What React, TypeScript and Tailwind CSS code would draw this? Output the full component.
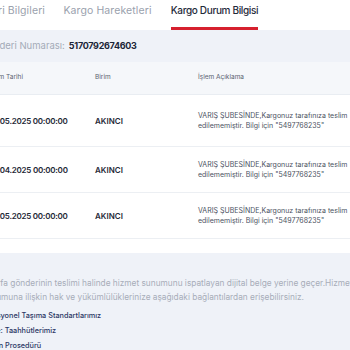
import React from "react";

const rows = [
  { date: "02.05.2025 00:00:00", unit: "AKINCI", h: "h-[52px]" },
  { date: "30.04.2025 00:00:00", unit: "AKINCI", h: "h-[46px]" },
  { date: "02.05.2025 00:00:00", unit: "AKINCI", h: "h-[46px]" },
];

const desc = (
  <>
    VARIŞ ŞUBESİNDE,Kargonuz tarafınıza teslim
    <br />
    edilememiştir. Bilgi için "5497768235"
  </>
);

export default function App() {
  return (
    <div
      className="w-[350px] h-[350px] overflow-hidden bg-[#eff2f8] text-[#1e293b]"
      style={{ fontFamily: "Inter, 'Noto Sans', sans-serif" }}
    >
      {/* Tabs */}
      <div className="bg-white h-[30px] flex items-start whitespace-nowrap">
        <div className="w-[45px] shrink-0 flex justify-end overflow-hidden pt-[3px] text-[10.5px] tracking-[0.1px] text-[#9aa1ad]">
          <span className="shrink-0">Gönderi Bilgileri</span>
        </div>
        <div className="ml-[24px] w-[77px] shrink-0 flex justify-center pt-[3px] text-[10.5px] tracking-[0.1px] text-[#9aa1ad]">
          Kargo Hareketleri
        </div>
        <div className="ml-[25px] w-[87px] shrink-0 flex flex-col">
          <div className="pt-[3px] h-[27px] flex justify-center text-[10px] tracking-[-0.35px] font-medium text-[#1f2a3a]">
            Kargo Durum Bilgisi
          </div>
          <div className="h-[3px] bg-[#d6202e]" />
        </div>
      </div>

      {/* Shipment number */}
      <div className="h-[32px] flex items-center ml-[-19px] whitespace-nowrap text-[9.5px]">
        <span className="text-[#a3aab7]">Gönderi Numarası:</span>
        <span className="ml-[4px] text-[9px] tracking-[-0.3px] font-bold text-[#1b2638]">5170792674603</span>
      </div>

      {/* Table */}
      <div className="ml-[-12px] w-[380px]">
        <div className="h-[33px] bg-[#f5f7fa] border-b border-[#e9edf2] grid grid-cols-[107px_103px_1fr] items-center text-[6.5px] text-[#5b6270] whitespace-nowrap">
          <div>İşlem Tarihi</div>
          <div>Birim</div>
          <div>İşlem Açıklama</div>
        </div>
        <div className="bg-white pb-[14px]">
          {rows.map((r, i) => (
            <div
              key={i}
              className={`${r.h} border-b border-[#eceff3] grid grid-cols-[107px_103px_1fr] items-center whitespace-nowrap`}
            >
              <div className="text-[8px] tracking-[-0.25px] font-semibold text-[#1f2937]">{r.date}</div>
              <div className="text-[8px] font-semibold text-[#1f2937]">{r.unit}</div>
              <div className="text-[7px] leading-[10px] text-[#4b5261]">{desc}</div>
            </div>
          ))}
        </div>
      </div>

      {/* Info text */}
      <div className="pt-[23px] ml-[-26px] w-[420px] whitespace-nowrap">
        <p className="text-[8.3px] leading-[14px] text-[#a7adb9]">
          Bu sayfa gönderinin teslimi halinde hizmet sunumunu ispatlayan dijital belge yerine geçer.Hizmet
          <br />
          <span className="ml-[8px]">sunumuna ilişkin hak ve yükümlülüklerinize aşağıdaki bağlantılardan erişebilirsiniz.</span>
        </p>
        <div className="mt-[7px] ml-[4px] flex flex-col gap-[5px] text-[7.3px] leading-[10px] font-medium text-[#2c3866]">
          <div>Profesyonel Taşıma Standartlarımız</div>
          <div className="ml-[3px]">Kalite: Taahhütlerimiz</div>
          <div>Tazmin Prosedürü</div>
        </div>
      </div>
    </div>
  );
}
